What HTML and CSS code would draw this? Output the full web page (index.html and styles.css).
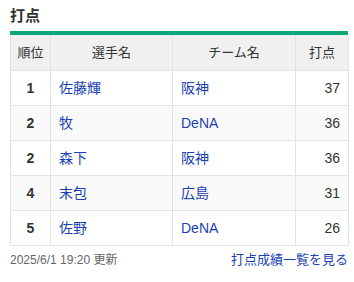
FILE: index.html
```html
<!DOCTYPE html>
<html lang="ja">
<head>
<meta charset="utf-8">
<link rel="stylesheet" href="styles.css">
</head>
<body>
<div class="box">
  <h2 class="title">打点</h2>
  <div class="bar"></div>
  <table class="rank">
    <colgroup><col class="c1"><col class="c2"><col class="c3"><col class="c4"></colgroup>
    <thead>
      <tr><th class="no">順位</th><th>選手名</th><th>チーム名</th><th>打点</th></tr>
    </thead>
    <tbody>
      <tr><td class="no">1</td><td><a href="#">佐藤輝</a></td><td><a href="#">阪神</a></td><td class="val">37</td></tr>
      <tr><td class="no">2</td><td><a href="#">牧</a></td><td><a href="#">DeNA</a></td><td class="val">36</td></tr>
      <tr><td class="no">2</td><td><a href="#">森下</a></td><td><a href="#">阪神</a></td><td class="val">36</td></tr>
      <tr><td class="no">4</td><td><a href="#">末包</a></td><td><a href="#">広島</a></td><td class="val">31</td></tr>
      <tr><td class="no">5</td><td><a href="#">佐野</a></td><td><a href="#">DeNA</a></td><td class="val">26</td></tr>
    </tbody>
  </table>
  <div class="foot">
    <span class="date">2025/6/1 19:20 更新</span>
    <a class="more" href="#">打点成績一覧を見る</a>
  </div>
</div>
</body>
</html>
```
FILE: styles.css
```css
html, body { margin: 0; padding: 0; background: #fff; }
body { font-family: "Liberation Sans", "Noto Sans CJK JP", sans-serif; color: #333; }
.box { padding: 5px 6px 0 10px; width: 338px; }
.title { margin: 0 0 4px; font-size: 15px; line-height: 22px; font-weight: bold; color: #333; }
.bar { height: 4px; background: #0aa878; }
.rank { width: 338px; border-collapse: collapse; table-layout: fixed; font-size: 14px; }
.c1 { width: 40px; } .c2 { width: 122px; } .c3 { width: 123px; } .c4 { width: 53px; }
.rank th, .rank td { border: 1px solid #e3e3e3; line-height: 34px; padding: 0 8px; white-space: nowrap; }
.rank th { background: #f0f0f0; font-weight: normal; font-size: 13px; line-height: 35px; color: #333; text-align: center; border-top: none; }
.rank tbody tr:nth-child(even) td { background: #fafafa; }
.rank td { text-align: left; }
.rank .no { padding: 0; text-align: center; }
.rank td.no { font-weight: bold; }
.rank td.val { text-align: right; }
.rank a { color: #1a41b3; text-decoration: none; }
.foot { display: flex; justify-content: space-between; align-items: center; margin-top: 5px; line-height: 18px; }
.date { font-size: 12px; color: #666; }
.more { font-size: 13px; color: #1a41b3; text-decoration: none; }
```
